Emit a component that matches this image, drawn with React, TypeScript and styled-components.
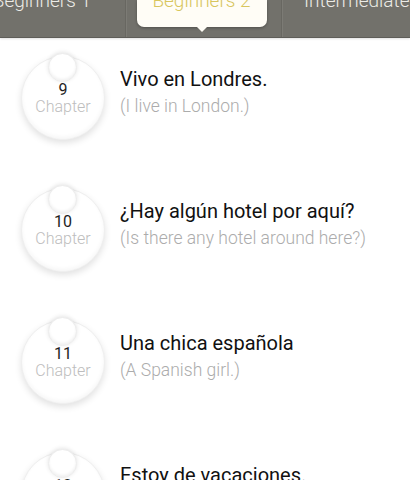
import React from 'react';
import styled, { createGlobalStyle } from 'styled-components';

type Lesson = { chapter: number; title: string; translation: string };

const lessons: Lesson[] = [
  { chapter: 9, title: 'Vivo en Londres.', translation: '(I live in London.)' },
  { chapter: 10, title: '¿Hay algún hotel por aquí?', translation: '(Is there any hotel around here?)' },
  { chapter: 11, title: 'Una chica española', translation: '(A Spanish girl.)' },
  { chapter: 12, title: 'Estoy de vacaciones.', translation: '(I am on holiday.)' },
];

const tabs = ['Beginners 1', 'Beginners 2', 'Intermediate'];

const App: React.FC = () => (
  <>
    <GlobalStyle />
    <Page>
      <TabBar>
        {tabs.map((tab, i) => (
          <Tab key={tab} $index={i}>
            {i === 1 ? (
              <Bubble>
                <TabLabel $active>{tab}</TabLabel>
              </Bubble>
            ) : (
              <TabLabel>{tab}</TabLabel>
            )}
          </Tab>
        ))}
      </TabBar>
      <List>
        {lessons.map((lesson) => (
          <Row key={lesson.chapter}>
            <Badge>
              <Knob />
              <Number>{lesson.chapter}</Number>
              <ChapterLabel>Chapter</ChapterLabel>
            </Badge>
            <Texts>
              <Title>{lesson.title}</Title>
              <Translation>{lesson.translation}</Translation>
            </Texts>
          </Row>
        ))}
      </List>
    </Page>
  </>
);

export default App;

const GlobalStyle = createGlobalStyle`
  html, body {
    margin: 0;
    padding: 0;
    background: #ffffff;
  }
  body {
    font-family: Roboto, "Liberation Sans", sans-serif;
  }
`;

const Page = styled.div`
  width: 410px;
  height: 480px;
  overflow: hidden;
  background: #ffffff;
`;

const TabBar = styled.div`
  display: grid;
  grid-template-columns: 126px 156px 1fr;
  height: 37px;
  background: #72716b;
  border-bottom: 1px solid #5e5d58;
  box-shadow: 0 1px 2px rgba(0, 0, 0, 0.12);
`;

const tabAlign = ['flex-end', 'center', 'flex-start'];
const tabPadding = ['0 34px 0 0', '0', '0 0 0 22px'];

const Tab = styled.div<{ $index: number }>`
  position: relative;
  display: flex;
  justify-content: ${(p) => tabAlign[p.$index]};
  padding: ${(p) => tabPadding[p.$index]};
  border-right: ${(p) => (p.$index === 2 ? 'none' : '1px solid #686761')};
  box-shadow: ${(p) => (p.$index === 2 ? 'none' : '1px 0 0 #7c7b75')};
  overflow: visible;
`;

const Bubble = styled.div`
  position: relative;
  width: 130px;
  height: 27px;
  margin-left: -4px;
  display: flex;
  justify-content: center;
  background: #fffdf6;
  border-radius: 0 0 7px 7px;
  box-shadow: 0 1px 3px rgba(0, 0, 0, 0.3);

  &::after {
    content: '';
    position: absolute;
    left: 60px;
    bottom: -5px;
    width: 0;
    height: 0;
    border-left: 5px solid transparent;
    border-right: 5px solid transparent;
    border-top: 5px solid #fffdf6;
  }
`;

const TabLabel = styled.span<{ $active?: boolean }>`
  margin-top: -11px;
  font-family: Roboto, "Liberation Sans", sans-serif;
  font-weight: 300;
  font-size: 19px;
  line-height: 24px;
  color: ${(p) => (p.$active ? '#d8c65e' : '#ecebe6')};
  white-space: nowrap;
`;

const List = styled.div`
  display: flex;
  flex-direction: column;
  padding-top: 8px;
`;

const Row = styled.div`
  display: flex;
  align-items: flex-start;
  height: 132px;
  flex-shrink: 0;
`;

const Badge = styled.div`
  position: relative;
  width: 84px;
  height: 84px;
  margin: 10px 15px 0 21px;
  border-radius: 50%;
  background: #ffffff;
  border: 1px solid #efefef;
  box-sizing: border-box;
  box-shadow: 0 3px 7px rgba(0, 0, 0, 0.12), inset 0 -2px 4px rgba(0, 0, 0, 0.04);
  display: flex;
  flex-direction: column;
  align-items: center;
  padding-top: 24px;
`;

const Knob = styled.div`
  position: absolute;
  top: -4px;
  left: 50%;
  width: 29px;
  height: 29px;
  margin-left: -15px;
  border-radius: 50%;
  background: #ffffff;
  border: 1px solid #ececec;
  box-sizing: border-box;
  box-shadow: 0 -1px 4px rgba(0, 0, 0, 0.1), inset 0 -2px 3px rgba(0, 0, 0, 0.06);
`;

const Number = styled.div`
  position: relative;
  font-family: Roboto, "Liberation Sans", sans-serif;
  font-size: 16px;
  line-height: 17px;
  color: #1e1e1e;
`;

const ChapterLabel = styled.div`
  position: relative;
  font-family: Roboto, "Liberation Sans", sans-serif;
  font-weight: 300;
  font-size: 16px;
  line-height: 17px;
  color: #bdbdbd;
`;

const Texts = styled.div`
  display: flex;
  flex-direction: column;
  gap: 4px;
  padding-top: 21px;
`;

const Title = styled.div`
  font-family: Roboto, "Liberation Sans", sans-serif;
  font-size: 20px;
  line-height: 24px;
  color: #111111;
  white-space: nowrap;
`;

const Translation = styled.div`
  font-family: Roboto, "Liberation Sans", sans-serif;
  font-weight: 300;
  font-size: 17.5px;
  line-height: 22px;
  color: #acacac;
  white-space: nowrap;
`;
